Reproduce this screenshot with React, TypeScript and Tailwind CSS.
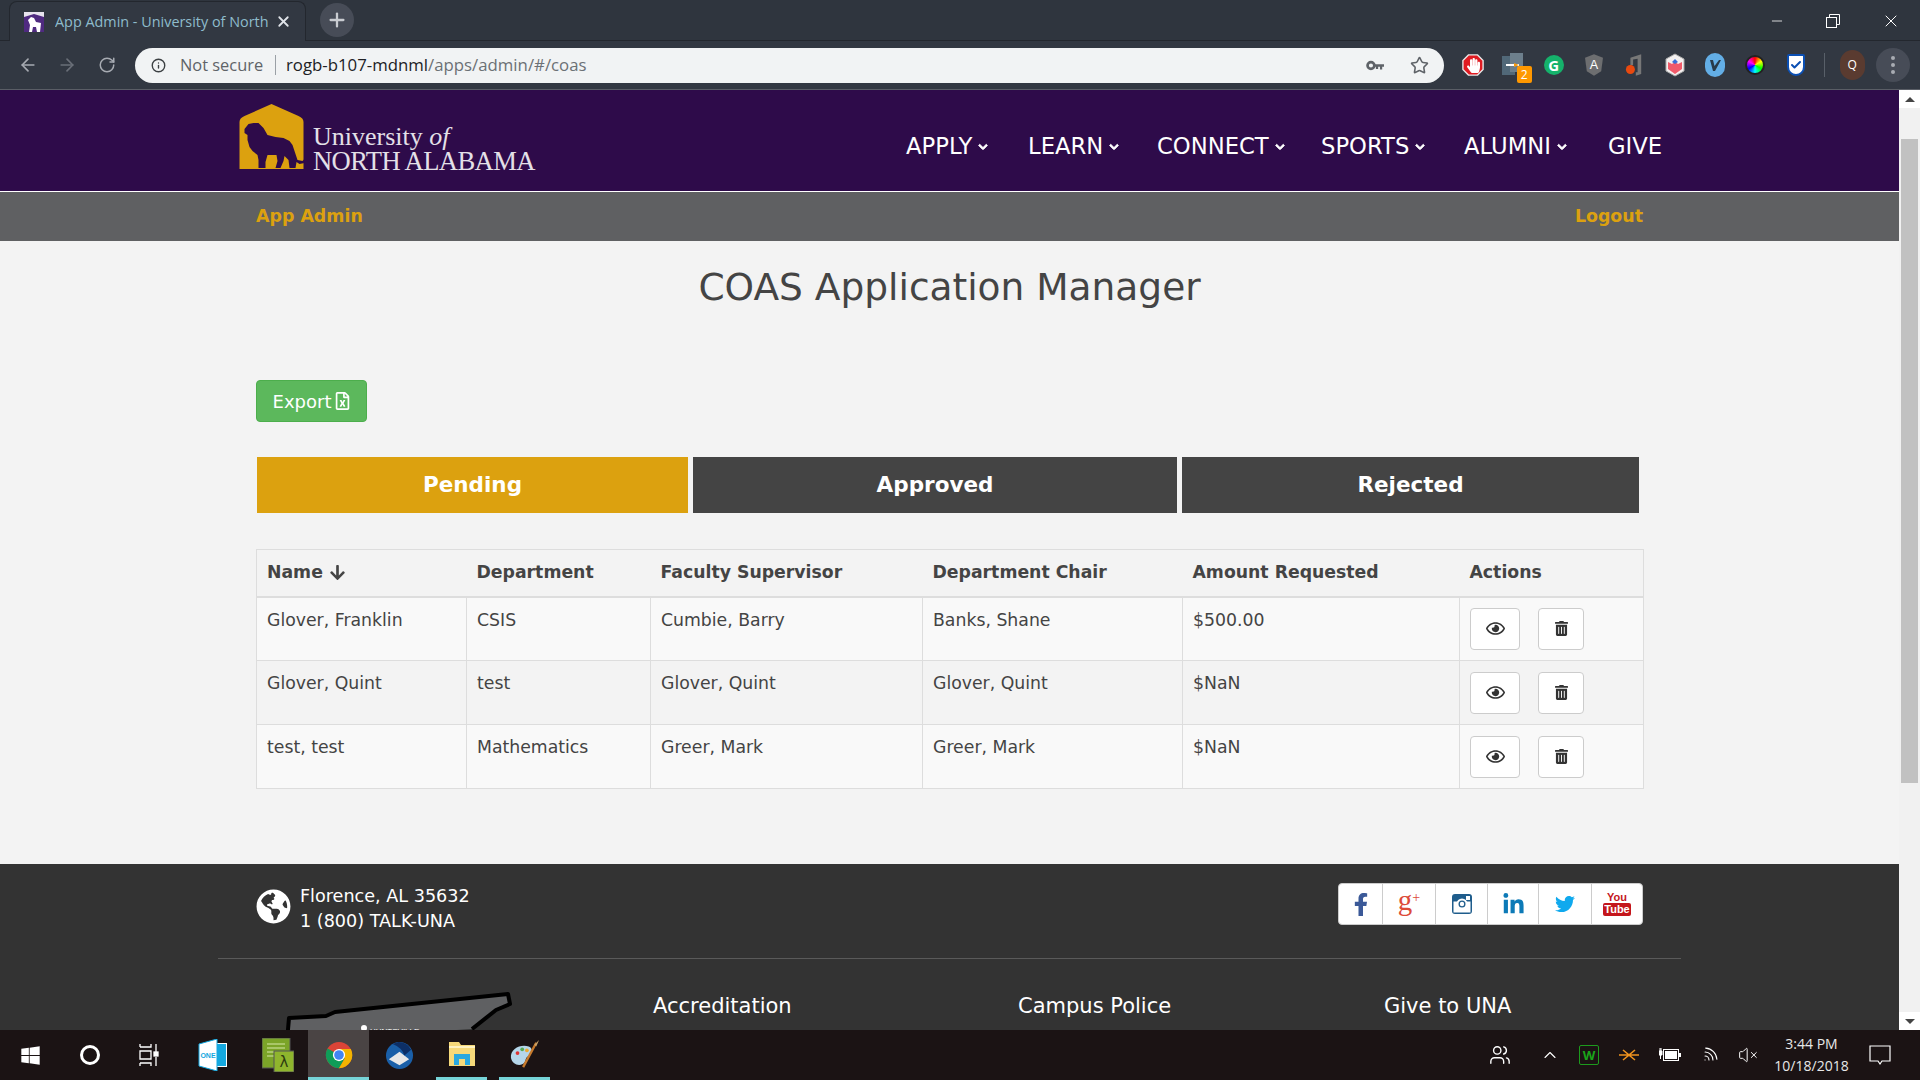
import React from "react";
import { ArrowLeft, ArrowRight, RotateCw, Info, Star, Plus, X, Minus, ChevronUp, Wifi, VolumeX, Users, Check } from "lucide-react";
import { FaRegEye, FaTrashAlt, FaFacebookF, FaLinkedinIn, FaTwitter, FaGlobeAmericas, FaArrowDown, FaRegFileExcel, FaChevronDown, FaWindows, FaHandPaper } from "react-icons/fa";

const sans = "font-['DejaVu_Sans',sans-serif]";
const ui = "font-['Open_Sans',sans-serif]";

function Lion({ className }: { className?: string }) {
  return (
    <svg viewBox="0 0 65 65" className={className}>
      <path d="M0 65V18Q0 14 5 12L32 0L59 12Q64 14 64 18V65Z" fill="#dca10f" />
      <path d="M5 25L9 20L14 19L19 19L24 24L28 31L36 33L44 34L50 37L53 41L56 50L58 56L63 57L65 55L65 59L60 60L57 58L56 64L50 64L49 56L45 52L44 57L41 64L36 64L38 57L37 51L28 51L26 58L26 64L19 64L19 56L18 51L13 47L10 43L8 36L8 31L5 29Z" fill="#2e0b4a" />
    </svg>
  );
}

function ChromeLogo() {
  return (
    <svg viewBox="0 0 32 32" className="w-[28px] h-[28px]">
      <circle cx="16" cy="16" r="15" fill="#db4437" />
      <path d="M16 16L3 8.5A15 15 0 0 0 16 31L22.5 20Z" fill="#0f9d58" />
      <path d="M16 9H29.5A15 15 0 0 1 16 31L22.5 20Z" fill="#f4b400" />
      <circle cx="16" cy="16" r="7" fill="#fff" />
      <circle cx="16" cy="16" r="5.5" fill="#4285f4" />
    </svg>
  );
}

function Ext({ children }: { children: React.ReactNode }) {
  return <div className="w-[40.3px] h-[32px] flex items-center justify-center relative shrink-0">{children}</div>;
}

function BrowserChrome() {
  return (
    <div className={`${ui} shrink-0 bg-[#323842] h-[90px] border-b border-[#5a5e66] flex flex-col`}>
      <div className="h-[41px] flex items-end bg-[#2f353e] border-b border-[#23272e]">
        <div className="ml-[9px] w-[297px] h-[40px] bg-[#323842] rounded-t-[8px] border border-b-0 border-[#23272e] flex items-center relative top-[1px]">
          <div className="ml-[14px] w-[20px] h-[20px] bg-[#4f2a80] flex items-center justify-center overflow-hidden">
            <svg viewBox="0 0 20 20" className="w-[20px] h-[20px]"><path d="M0 0H20V5L10 2L0 5Z" fill="#e8e4ee" /><path d="M4 8L7 5L10 6L12 10L17 11L16 20H13L12 15L9 15L8 20H5L6 13Z" fill="#fff" /></svg>
          </div>
          <span className="ml-[11px] w-[216px] overflow-hidden whitespace-nowrap text-[14.4px] text-[#8ebccc]">App Admin - University of North</span>
          <X className="ml-[4px] w-[17px] h-[17px] text-[#dfe3e8]" strokeWidth={2.5} />
        </div>
        <div className="ml-[14px] mb-[3px] w-[34px] h-[34px] rounded-full bg-[#474c57] flex items-center justify-center">
          <Plus className="w-[22px] h-[22px] text-[#c9ccd1]" strokeWidth={2.5} />
        </div>
        <div className="flex-1" />
        <div className="flex items-center h-[41px] mb-[-1px] text-white">
          <Minus className="w-[16px] h-[16px] mr-[41px]" strokeWidth={1.2} />
          <svg viewBox="0 0 14 14" className="w-[14px] h-[14px] mr-[41px]" fill="none" stroke="#fff"><rect x="0.5" y="3.5" width="10" height="10" /><path d="M3.5 3.5V0.5H13.5V10.5H10.5" /></svg>
          <X className="w-[20px] h-[20px] mr-[19px]" strokeWidth={1.2} />
        </div>
      </div>
      <div className="flex-1 flex items-center text-[14px]">
        <ArrowLeft className="ml-[18px] w-[20px] h-[20px] text-[#a7abb2]" strokeWidth={2} />
        <ArrowRight className="ml-[19px] w-[20px] h-[20px] text-[#6a6f78]" strokeWidth={2} />
        <RotateCw className="ml-[21px] w-[18px] h-[18px] text-[#a7abb2]" strokeWidth={2} />
        <div className="ml-[19px] w-[1309px] h-[35px] rounded-full bg-[#f1f3f4] flex items-center relative">
          <Info className="ml-[16px] w-[15px] h-[15px] text-[#3c4043]" strokeWidth={2.2} />
          <span className="ml-[14px] text-[#5f6368] text-[16.4px] whitespace-nowrap w-[85px]">Not secure</span>
          <span className="ml-[10px] w-px h-[20px] bg-[#9aa0a6]" />
          <span className="ml-[10px] text-[16.8px] whitespace-nowrap text-[#202124]">rogb-b107-mdnml<span className="text-[#6b7075]">/apps/admin/#/coas</span></span>
          <div className="flex-1" />
          <svg viewBox="0 0 20 12" className="w-[18px] h-[11px]"><circle cx="5.5" cy="6" r="3.8" fill="none" stroke="#5f6368" strokeWidth="3" /><path d="M9 4.5H20V7.5H18V10.5H15.5V7.5H13.5V10H11V7.5H9Z" fill="#5f6368" /></svg>
          <Star className="ml-[26px] mr-[15px] w-[19px] h-[19px] text-[#5f6368]" strokeWidth={2} />
        </div>
        <div className="ml-[9px] flex items-center">
          <Ext>
            <svg viewBox="0 0 24 24" className="w-[22px] h-[24px]"><path d="M7 1H17L23 7V17L17 23H7L1 17V7Z" fill="#e01b22" stroke="#e8e8e8" strokeWidth="1.5" /></svg>
            <FaHandPaper className="absolute w-[13px] h-[15px] text-white" />
          </Ext>
          <Ext>
            <svg viewBox="0 0 22 24" className="w-[22px] h-[24px]"><rect x="0" y="3" width="13" height="19" fill="#516878" /><rect x="8" y="0" width="13" height="19" fill="#6d7f8c" /><path d="M4 12H17" stroke="#fff" strokeWidth="2" /><path d="M12 10L17 12L12 14" fill="#f59a12" /></svg>
            <span className="absolute right-[2px] bottom-[-2px] w-[15px] h-[17px] rounded-[2px] bg-[#ff9800] text-white text-[12px] leading-[17px] text-center">2</span>
          </Ext>
          <Ext>
            <div className="w-[20px] h-[20px] rounded-full bg-[#15b26b] text-white text-[15px] font-bold leading-[20px] text-center">G</div>
          </Ext>
          <Ext>
            <svg viewBox="0 0 20 24" className="w-[18px] h-[22px]"><path d="M10 0L20 4L18 19L10 24L2 19L0 4Z" fill="#6d6e70" /><text x="10" y="16" fontSize="14" fill="#fff" textAnchor="middle" fontFamily="Liberation Sans">A</text></svg>
          </Ext>
          <Ext>
            <svg viewBox="0 0 20 24" className="w-[18px] h-[24px]"><path d="M6 4L18 0V22L12 24V20H14V5L9 6V12H6Z" fill="#777" /><circle cx="6" cy="17" r="5" fill="#e8490f" /></svg>
          </Ext>
          <Ext>
            <svg viewBox="0 0 20 24" className="w-[20px] h-[24px]"><path d="M10 1L19 6V18L10 23L1 18V6Z" fill="#f3f0f0" stroke="#aaa" /><path d="M3 9L7 11L10 9L13 11L17 9V16L10 21L3 16Z" fill="#f05a6a" /><path d="M7 9L10 6L13 9L10 11Z" fill="#3a6fd8" /></svg>
          </Ext>
          <Ext>
            <div className="w-[20px] h-[24px] rounded-full bg-[#63aee6] flex items-center justify-center"><svg viewBox="0 0 14 14" className="w-[14px] h-[14px]"><path d="M2 2H5L6.5 8L11 2H13L7 13H5Z" fill="#283a4a" /></svg></div>
          </Ext>
          <Ext>
            <div className="w-[20px] h-[20px] rounded-full bg-[conic-gradient(#ff0000,#ffff00,#00ff00,#00ffff,#0000ff,#ff00ff,#ff0000)] border-2 border-[#222]" />
          </Ext>
          <Ext>
            <div className="w-[18px] h-[22px] bg-white border-2 border-[#0b4fb3] rounded-b-[9px] rounded-t-[2px] flex items-center justify-center"><Check className="w-[12px] h-[12px] text-[#0b4fb3]" strokeWidth={4} /></div>
          </Ext>
          <span className="ml-[8px] w-px h-[24px] bg-[#596069]" />
          <div className="ml-[15px] w-[25px] h-[30px] rounded-full bg-[#5a3b30] text-white text-[12px] leading-[30px] text-center">Q</div>
          <div className="ml-[11px] w-[34px] h-[34px] rounded-full bg-[#474c57] flex flex-col items-center justify-center gap-[3px]">
            <span className="w-[4px] h-[4px] rounded-full bg-[#a8acb3]" />
            <span className="w-[4px] h-[4px] rounded-full bg-[#a8acb3]" />
            <span className="w-[4px] h-[4px] rounded-full bg-[#a8acb3]" />
          </div>
        </div>
      </div>
    </div>
  );
}

function NavItem({ label, w, caret = true }: { label: string; w: string; caret?: boolean }) {
  return (
    <div className={`${w} flex items-center text-white text-[22.7px] whitespace-nowrap`}>
      <span>{label}</span>
      {caret && <FaChevronDown className="ml-[6px] mt-[3px] w-[10px] h-[10px] [stroke-width:50px]" />}
    </div>
  );
}

function Header() {
  return (
    <div className="h-[102px] bg-[#2e0b4a] border-b border-white flex items-center shrink-0">
      <Lion className="ml-[239px] mt-[-8px] w-[66px] h-[65px] shrink-0" />
      <div className="ml-[8px] mt-[17px] font-['Liberation_Serif',serif] text-[#e4e0e8] leading-[25px] whitespace-nowrap w-[222px]">
        <div className="text-[26px]">University <span className="italic">of</span></div>
        <div className="text-[26.6px] tracking-[-0.6px]">NORTH ALABAMA</div>
      </div>
      <div className={`${sans} flex items-center mt-[11px] ml-[371px]`}>
        <NavItem label="APPLY" w="w-[122px]" />
        <NavItem label="LEARN" w="w-[129px]" />
        <NavItem label="CONNECT" w="w-[164px]" />
        <NavItem label="SPORTS" w="w-[143px]" />
        <NavItem label="ALUMNI" w="w-[144px]" />
        <NavItem label="GIVE" w="w-[60px]" caret={false} />
      </div>
    </div>
  );
}

const rows = [
  ["Glover, Franklin", "CSIS", "Cumbie, Barry", "Banks, Shane", "$500.00"],
  ["Glover, Quint", "test", "Glover, Quint", "Glover, Quint", "$NaN"],
  ["test, test", "Mathematics", "Greer, Mark", "Greer, Mark", "$NaN"],
];

function Table() {
  return (
    <table className="mt-[36px] w-[1387px] table-fixed border-collapse text-[#444] text-[17.3px]">
      <colgroup>
        <col className="w-[210px]" />
        <col className="w-[184px]" />
        <col className="w-[272px]" />
        <col className="w-[260px]" />
        <col className="w-[277px]" />
        <col className="w-[184px]" />
      </colgroup>
      <thead>
        <tr className="h-[47px] border border-[#ddd] border-b-2">
          <th className="px-[10px] text-left font-bold"><span className="flex items-center gap-[6px]">Name <FaArrowDown className="w-[17px] h-[17px]" /></span></th>
          <th className="px-[10px] text-left font-bold">Department</th>
          <th className="px-[10px] text-left font-bold">Faculty Supervisor</th>
          <th className="px-[10px] text-left font-bold">Department Chair</th>
          <th className="px-[10px] text-left font-bold">Amount Requested</th>
          <th className="px-[10px] text-left font-bold">Actions</th>
        </tr>
      </thead>
      <tbody>
        {rows.map((r, i) => (
          <tr key={i} className={`h-[64px] ${i % 2 === 0 ? "bg-[#f9f9f9]" : "bg-[#f3f3f3]"}`}>
            {r.map((c, j) => (
              <td key={j} className="border border-[#ddd] px-[10px] pt-[11px] align-top leading-[22px] whitespace-nowrap">{c}</td>
            ))}
            <td className="border border-[#ddd] pl-[10px] align-middle">
              <div className="flex items-center gap-[18px]">
                <button className="w-[50px] h-[42px] bg-white border border-[#ccc] rounded-[4px] flex items-center justify-center text-[#333]"><FaRegEye className="w-[19px] h-[17px]" /></button>
                <button className="w-[46px] h-[42px] bg-white border border-[#ccc] rounded-[4px] flex items-center justify-center text-[#333]"><FaTrashAlt className="w-[13px] h-[15px]" /></button>
              </div>
            </td>
          </tr>
        ))}
      </tbody>
    </table>
  );
}

function Main() {
  return (
    <div className={`${sans} bg-[#f3f3f3] h-[623px] shrink-0 pl-[256px] flex flex-col`}>
      <div className="w-[1387px] shrink-0 text-center text-[#444] text-[37.5px] leading-[44px] pt-[24px]">COAS Application Manager</div>
      <button className="mt-[71px] w-[111px] h-[42px] shrink-0 bg-[#5cb85c] border border-[#4cae4c] rounded-[4px] text-white text-[18px] flex items-center justify-center gap-[4px]">
        Export <FaRegFileExcel className="w-[15px] h-[18px]" />
      </button>
      <div className="mt-[35px] ml-[1px] flex gap-[5px] text-white font-bold text-[21.5px]">
        <div className="w-[431px] h-[56px] bg-[#dca10f] flex items-center justify-center">Pending</div>
        <div className="w-[484px] h-[56px] bg-[#444] flex items-center justify-center">Approved</div>
        <div className="w-[457px] h-[56px] bg-[#444] flex items-center justify-center">Rejected</div>
      </div>
      <Table />
    </div>
  );
}

function Social() {
  const cell = "h-full flex items-center justify-center border-r border-[#ccc]";
  return (
    <div className="w-[305px] h-[42px] bg-white rounded-[4px] border border-[#ccc] flex items-center">
      <div className={`${cell} w-[44px] text-[#3b5998]`}><FaFacebookF className="w-[20px] h-[23px]" /></div>
      <div className={`${cell} w-[53px] text-[#dd4b39] font-['Liberation_Serif',serif] text-[29px] leading-none pb-[8px]`}>g<span className="text-[14px] mb-[4px]">+</span></div>
      <div className={`${cell} w-[52px]`}>
        <svg viewBox="0 0 20 20" className="w-[20px] h-[20px]"><rect width="20" height="20" rx="3" fill="#1f5d8c" /><rect x="1.5" y="7.5" width="17" height="11" fill="#fff" /><circle cx="10" cy="10" r="5.5" fill="#fff" /><circle cx="10" cy="10" r="3.5" fill="#1f5d8c" /><circle cx="10" cy="10" r="2.2" fill="#fff" /><rect x="14" y="2" width="4" height="4" fill="#fff" /></svg>
      </div>
      <div className={`${cell} w-[51px] text-[#0d7ab7]`}><FaLinkedinIn className="w-[23px] h-[23px]" /></div>
      <div className={`${cell} w-[53px] text-[#0fa9ee]`}><FaTwitter className="w-[22px] h-[20px]" /></div>
      <div className="h-full flex-1 flex flex-col items-center justify-center font-['Liberation_Sans',sans-serif] font-bold leading-none">
        <span className="text-[#c4161c] text-[11px] leading-[11px]">You</span>
        <span className="bg-[#c4161c] text-white text-[11px] leading-[13px] px-[1px] rounded-[2px]">Tube</span>
      </div>
    </div>
  );
}

function Footer() {
  return (
    <div className={`${sans} bg-[#333] flex-1 min-h-0 overflow-hidden`}>
      <div className="h-[95px] ml-[218px] w-[1463px] border-b border-[#5a5a5a] flex items-start">
        <FaGlobeAmericas className="ml-[38px] mt-[25px] w-[35px] h-[35px] text-white shrink-0" />
        <div className="ml-[9px] mt-[20px] text-white text-[17.6px] leading-[25px] whitespace-nowrap">
          <div>Florence, AL 35632</div>
          <div>1 (800) TALK-UNA</div>
        </div>
        <div className="flex-1" />
        <div className="mr-[38px] mt-[19px]"><Social /></div>
      </div>
      <div className="flex items-start">
        <svg viewBox="0 0 240 50" className="ml-[280px] mt-[32px] w-[240px] h-[50px] shrink-0">
          <path d="M7 50L9 27L46 25L55 21L228 3L230 13L216 19L192 38" fill="#5f6062" stroke="#000" strokeWidth="4" strokeLinejoin="round" />
          <circle cx="84" cy="37" r="3" fill="#fff" />
          <text x="90" y="43" fontSize="8" fill="#fff" fontFamily="Liberation Sans">HUNTSVILLE</text>
        </svg>
        <div className="ml-[133px] mt-[32px] flex text-white text-[21px] whitespace-nowrap">
          <div className="w-[365px]">Accreditation</div>
          <div className="w-[366px]">Campus Police</div>
          <div>Give to UNA</div>
        </div>
      </div>
    </div>
  );
}

function Scrollbar() {
  return (
    <div className="w-[21px] shrink-0 bg-[#f1f1f1] flex flex-col">
      <div className="h-[18px] bg-white flex items-center justify-center"><div className="w-0 h-0 border-x-[5px] border-x-transparent border-b-[5px] border-b-[#444]" /></div>
      <div className="h-[31px]" />
      <div className="ml-[2px] w-[17px] h-[644px] bg-[#c1c1c1]" />
      <div className="flex-1" />
      <div className="h-[18px] bg-white flex items-center justify-center"><div className="w-0 h-0 border-x-[5px] border-x-transparent border-t-[5px] border-t-[#444]" /></div>
    </div>
  );
}

function Tile({ w, active, under, children }: { w: string; active?: boolean; under?: boolean; children: React.ReactNode }) {
  return (
    <div className={`${w} h-[50px] flex items-center justify-center relative shrink-0 ${active ? "bg-[#4a4444]" : ""}`}>
      {children}
      {(under || active) && <span className={`absolute bottom-0 h-[3px] bg-[#76d4d8] ${active ? "left-0 right-0" : "left-[6px] right-[6px]"}`} />}
    </div>
  );
}

function Taskbar() {
  return (
    <div className={`${ui} h-[50px] bg-[#1b1314] shrink-0 flex items-center text-white`}>
      <Tile w="w-[60px]"><FaWindows className="w-[21px] h-[21px]" /></Tile>
      <Tile w="w-[59px]"><div className="w-[20px] h-[20px] rounded-full border-[3px] border-white" /></Tile>
      <Tile w="w-[60px]">
        <svg viewBox="0 0 20 22" className="w-[20px] h-[22px]" fill="none" stroke="#fff" strokeWidth="1.3"><path d="M1 3H12V0M1 3V0M1 7H12V15H1ZM1 19H12V22M1 19V22M17 0V8M17 13V22" /><rect x="15" y="8" width="4" height="4" fill="#fff" /></svg>
      </Tile>
      <Tile w="w-[68px]">
        <svg viewBox="0 0 30 32" className="w-[30px] h-[32px]"><path d="M14 4H29V28H14Z" fill="#fff" /><path d="M16 5H28V27H16Z" fill="#14a8e0" /><path d="M1 5L19 0V32L1 27Z" fill="#fff" stroke="#14a8e0" /><text x="10" y="19" fontSize="7" fill="#14a8e0" fontWeight="bold" textAnchor="middle" fontFamily="Liberation Sans">ONE</text></svg>
      </Tile>
      <Tile w="w-[61px]">
        <svg viewBox="0 0 32 34" className="w-[32px] h-[34px]"><rect x="0" y="0" width="28" height="30" fill="#7ba428" stroke="#555" /><path d="M5 6H23M5 10H23M5 14H23M5 18H23" stroke="#d7e8a8" /><rect x="12" y="13" width="20" height="21" fill="#8fb52d" stroke="#555" /><text x="22" y="29" fontSize="15" fill="#2c3b10" textAnchor="middle" fontFamily="DejaVu Sans">λ</text></svg>
      </Tile>
      <Tile w="w-[61px]" active><ChromeLogo /></Tile>
      <Tile w="w-[61px]">
        <svg viewBox="0 0 30 32" className="w-[29px] h-[31px]"><circle cx="15" cy="16" r="14" fill="#1a5fa8" /><path d="M4 20L15 12L25 20L15 26Z" fill="#e8e8e8" /><path d="M8 4Q18 8 20 16L27 10Q23 2 14 2Z" fill="#0d2f66" /></svg>
      </Tile>
      <Tile w="w-[63px]" under>
        <svg viewBox="0 0 28 26" className="w-[28px] h-[26px] mb-[2px]"><path d="M1 1H11L13 4H27V25H1Z" fill="#f6d97a" /><rect x="1" y="5" width="26" height="2" fill="#fff3c2" /><path d="M6 13H22V24H17V18H11V24H6Z" fill="#29a8e0" /></svg>
      </Tile>
      <Tile w="w-[63px]" under>
        <svg viewBox="0 0 32 32" className="w-[30px] h-[30px] mb-[2px]"><path d="M1 20C0 10 12 5 20 8C25 10 24 16 20 18C15 20 18 25 13 27C8 29 2 26 1 20Z" fill="#b5d6ea" /><circle cx="8" cy="15" r="2" fill="#d33" /><circle cx="13" cy="11" r="2" fill="#5a5" /><circle cx="18" cy="12" r="2" fill="#ea3" /><path d="M14 30L28 4" stroke="#c77a2c" strokeWidth="2.5" /><path d="M26 6L31 1L28 8Z" fill="#c9a36a" /></svg>
      </Tile>
      <div className="flex-1" />
      <Users className="w-[22px] h-[22px] mr-[28px]" strokeWidth={1.5} />
      <ChevronUp className="w-[20px] h-[20px] mr-[19px] ml-[1px]" strokeWidth={1.3} />
      <div className="w-[20px] h-[20px] border border-[#1d9a1d] rounded-[2px] mr-[20px] text-[#1aa51a] text-[13px] font-bold leading-[18px] text-center">W</div>
      <svg viewBox="0 0 20 14" className="w-[20px] h-[14px] mr-[20px]" fill="none" stroke="#f0931e" strokeWidth="1.6"><path d="M0 7H20M4 2L10 7L4 12M16 2L10 7L16 12" /></svg>
      <svg viewBox="0 0 22 14" className="w-[22px] h-[14px] mr-[19px]"><path d="M0 3V7H3V3ZM1 0V3M2 0V3M1.5 7V11" stroke="#fff" fill="#fff" /><rect x="4.5" y="1.5" width="15" height="11" fill="none" stroke="#fff" /><rect x="6" y="3" width="12" height="8" fill="#fff" /><rect x="20" y="5" width="2" height="4" fill="#fff" /></svg>
      <Wifi className="w-[19px] h-[19px] mr-[19px] rotate-45" strokeWidth={1.4} />
      <VolumeX className="w-[20px] h-[20px] mr-[11px]" strokeWidth={1.2} />
      <div className="w-[85px] text-center text-[14px] leading-[22px] text-[#e8e8e8]">
        <div>3:44 PM</div>
        <div>10/18/2018</div>
      </div>
      <svg viewBox="0 0 22 22" className="ml-[15px] w-[22px] h-[22px] mr-[29px]" fill="none" stroke="#fff" strokeWidth="1.2"><path d="M1 2H21V17H13L11 20L9 17H1Z" /></svg>
    </div>
  );
}

export default function App() {
  return (
    <div className="h-screen w-[1920px] overflow-hidden flex flex-col bg-[#f3f3f3]">
      <BrowserChrome />
      <div className="flex-1 min-h-0 flex">
        <div className="flex-1 min-w-0 flex flex-col">
          <Header />
          <div className={`${sans} h-[49px] bg-[#5f6062] shrink-0 flex items-center justify-between pl-[256px] pr-[256px] text-[#dca10f] font-bold text-[17.4px]`}>
            <span>App Admin</span>
            <span>Logout</span>
          </div>
          <Main />
          <Footer />
        </div>
        <Scrollbar />
      </div>
      <Taskbar />
    </div>
  );
}
